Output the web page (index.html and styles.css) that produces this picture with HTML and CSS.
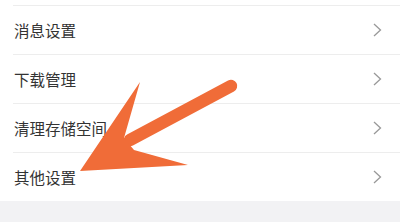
FILE: index.html
```html
<!DOCTYPE html>
<html lang="zh-CN">
<head>
    <meta charset="UTF-8">
    <meta name="viewport" content="width=device-width, initial-scale=1.0">
    <title>设置</title>
    <link rel="stylesheet" href="styles.css">
</head>
<body>
    <div class="page">
        <ul class="menu">
            <li class="menu-item"><span>消息设置</span><svg class="chevron" viewBox="0 0 9 14"><polyline points="1,1 7.5,7 1,13"/></svg></li>
            <li class="menu-item"><span>下载管理</span><svg class="chevron" viewBox="0 0 9 14"><polyline points="1,1 7.5,7 1,13"/></svg></li>
            <li class="menu-item"><span>清理存储空间</span><svg class="chevron" viewBox="0 0 9 14"><polyline points="1,1 7.5,7 1,13"/></svg></li>
            <li class="menu-item"><span>其他设置</span><svg class="chevron" viewBox="0 0 9 14"><polyline points="1,1 7.5,7 1,13"/></svg></li>
        </ul>
        <div class="footer-gap"></div>

        <!-- arrow pointing at 其他设置 -->
        <svg class="pointer" width="400" height="222" viewBox="0 0 400 222">
            <line x1="231" y1="86" x2="130" y2="140" stroke="#f06c38" stroke-width="12.5" stroke-linecap="round"/>
            <polygon points="80,171 140,82 124,138 134,150 188,165" fill="#f06c38"/>
        </svg>
    </div>
</body>
</html>
```

FILE: styles.css
```css
body {
    margin: 0;
    background: #fff;
    font-family: "Noto Sans CJK SC", "Noto Sans", sans-serif;
}
.page {
    position: relative;
    width: 400px;
    height: 222px;
    overflow: hidden;
}
.menu {
    list-style: none;
    margin: 5px 0 0 13px;
    padding: 0;
}
.menu-item {
    display: flex;
    align-items: center;
    justify-content: space-between;
    height: 48px;
    border-top: 1px solid #ededed;
    padding: 0 18px 0 1px;
    font-size: 15.5px;
    color: #333;
}
.chevron {
    width: 9px;
    height: 14px;
    fill: none;
    stroke: #999;
    stroke-width: 1.3;
}
.footer-gap {
    height: 30px;
    background: #f2f2f4;
}
.pointer {
    position: absolute;
    left: 0;
    top: 0;
}
```
